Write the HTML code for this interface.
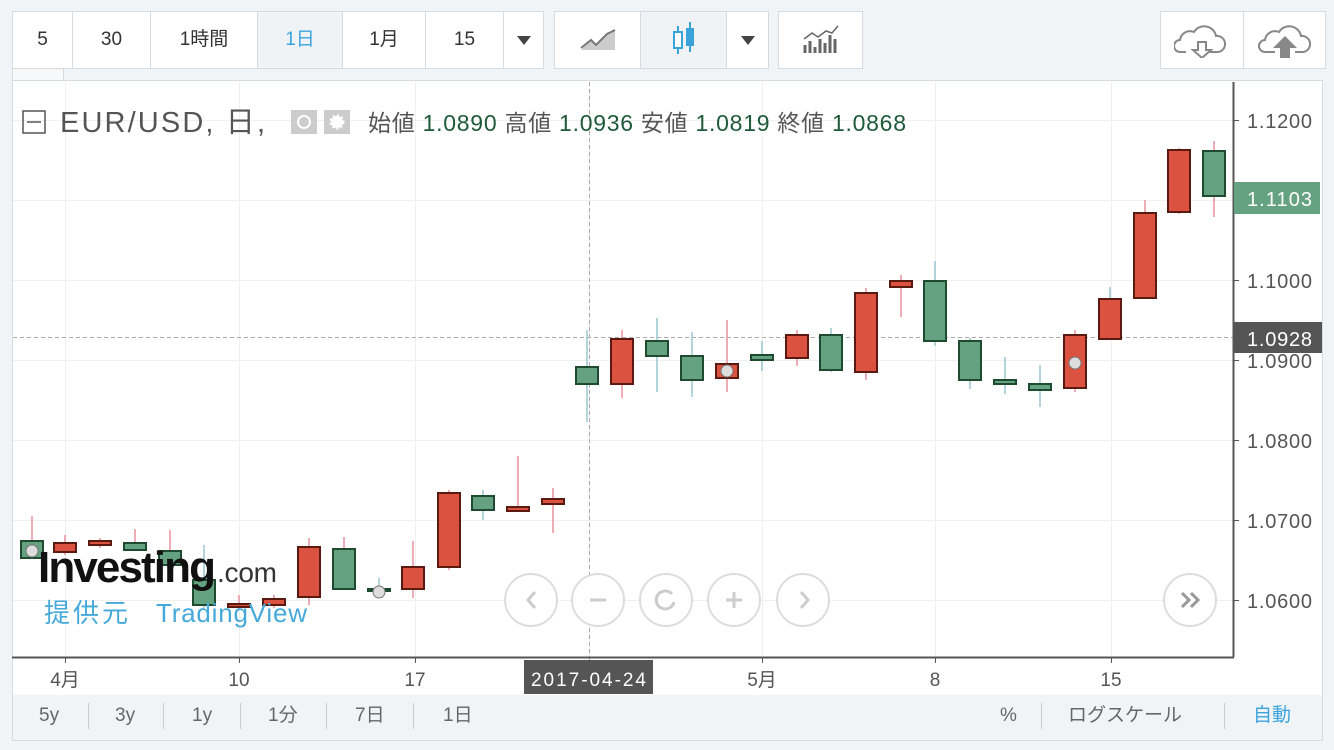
<!DOCTYPE html>
<html><head><meta charset="utf-8"><style>
*{margin:0;padding:0;box-sizing:border-box}
body{width:1334px;height:750px;background:#f1f4f7;font-family:"Liberation Sans","Noto Sans CJK JP",sans-serif;position:relative;overflow:hidden;color:#333}
.grp{position:absolute;top:11px;height:58px;background:#fff;border:1px solid #d6dbe0;display:flex}
.grp div{height:100%;border-right:1px solid #d6dbe0;display:flex;align-items:center;justify-content:center;font-size:19px;color:#333;line-height:20px}
.grp div span{display:block;height:22px;line-height:22px}
.grp div:last-child{border-right:none}
.sel{background:#f0f3f6}
.bb{position:absolute;font-size:19px;color:#666;top:703px;height:26px;line-height:26px}
.sep{position:absolute;top:703px;width:1px;height:26px;background:#c8ccd0}
</style></head><body>
<div class="grp" style="left:12px;width:532px">
<div style="width:60px"><span>5</span></div><div style="width:78px"><span>30</span></div><div style="width:107px"><span>1時間</span></div><div class="sel" style="width:85px;color:#3ba3dc"><span>1日</span></div><div style="width:83px"><span>1月</span></div><div style="width:78px"><span>15</span></div><div style="flex:1"><svg width="14" height="9"><path d="M0 0H14L7 9Z" fill="#444"/></svg></div>
</div>
<div class="grp" style="left:554px;width:215px">
<div style="width:86px"><svg width="38" height="24"><path d="M2 22L12 12L17 17L28 6L36 2V22Z" fill="#ccc"/><path d="M2 20L12 12L17 17L28 6L36 2" stroke="#777" stroke-width="2" fill="none"/></svg></div>
<div class="sel" style="width:86px"><svg width="26" height="40"><path d="M7 6V34M19 2V32" stroke="#3ba3dc" stroke-width="2"/><rect x="3" y="12" width="8" height="16" fill="#fff" stroke="#3ba3dc" stroke-width="2"/><rect x="15" y="8" width="8" height="18" fill="#3ba3dc"/></svg></div>
<div style="flex:1"><svg width="14" height="9"><path d="M0 0H14L7 9Z" fill="#444"/></svg></div>
</div>
<div class="grp" style="left:778px;width:85px"><div style="width:100%"><svg width="38" height="30"><path d="M3 28V20M8 28V16M13 28V22M18 28V14M23 28V18M28 28V10M33 28V14" stroke="#666" stroke-width="3"/><path d="M2 14L10 8L16 12L24 6L30 8L36 1" stroke="#666" stroke-width="1.5" fill="none"/></svg></div></div>
<div class="grp" style="left:1160px;width:166px">
<div style="width:83px"><svg width="56" height="36"><path d="M12 30H6a6 6 0 0 1 0-12a10 10 0 0 1 14-8a12 12 0 0 1 22 4a8 8 0 0 1 2 16H36" fill="none" stroke="#888" stroke-width="2"/><path d="M24 20h8v8h5l-9 8l-9-8h5z" fill="#fff" stroke="#888" stroke-width="2"/></svg></div>
<div style="flex:1"><svg width="56" height="36"><path d="M18 30H8a6 6 0 0 1 0-12a10 10 0 0 1 14-8a12 12 0 0 1 22 4a8 8 0 0 1 2 16H38" fill="none" stroke="#888" stroke-width="2"/><path d="M23 36V26h-7l12-12l12 12h-7v10z" fill="#888"/></svg></div>
</div>
<div style="position:absolute;left:12px;top:69px;width:52px;height:13px;border:1px solid #d6dbe0;border-top:none;background:#f7f8fa"></div>
<div style="position:absolute;left:12px;top:80px;width:1311px;height:661px;background:#fff;border:1px solid #d6dbe0"></div>
<div style="position:absolute;left:13px;top:695px;width:1309px;height:45px;background:#f1f4f7"></div>
<svg style="position:absolute;left:0;top:0" width="1334" height="750">
<g stroke="#f0f0f0" stroke-width="1">
<path d="M13 120.5H1233M13 200.5H1233M13 280.5H1233M13 360.5H1233M13 440.5H1233M13 520.5H1233M13 600.5H1233"/>
<path d="M65.5 82V657M239.5 82V657M415.5 82V657M589.5 82V657M762.5 82V657M935.5 82V657M1111.5 82V657"/>
</g>
<path d="M589.5 82V665" stroke="#aaa" stroke-dasharray="4 3"/>
<path d="M13 337.5H1233" stroke="#aaa" stroke-dasharray="4 3"/>
<g stroke-width="1.5">
<path d="M65 535V555M100 538V548M239 595V610M274 595V608M309 538V605M413 541V598M449 490V570M518 456V512M553 488V533M622 330V398M727 320V392M797 330V366M866 288V380M901 275V317M1075 330V392M1145 200V299M1179 148V214M1214 141V217M32 516V540M135 529V543M170 530V551M344 537V549" stroke="#e8909d"/>
<path d="M204 545V610M379 578V593M483 490V520M587 330V422M657 318V392M692 332V397M762 341V371M831 328V372M935 261V346M970 338V389M1005 357V394M1040 365V407M1110 287V300" stroke="#9cc5cf"/>
</g>
<g stroke="#1e4a30" stroke-width="2" fill="#65a282">
<rect x="21" y="541" width="22" height="17"/><rect x="124" y="543" width="22" height="7"/><rect x="159" y="551" width="22" height="14"/><rect x="193" y="580" width="22" height="25"/><rect x="333" y="549" width="22" height="40"/><rect x="368" y="589" width="22" height="2"/><rect x="472" y="496" width="22" height="14"/><rect x="576" y="367" width="22" height="17"/><rect x="646" y="341" width="22" height="15"/><rect x="681" y="356" width="22" height="24"/><rect x="751" y="355" width="22" height="5"/><rect x="820" y="335" width="22" height="35"/><rect x="924" y="281" width="22" height="60"/><rect x="959" y="341" width="22" height="39"/><rect x="994" y="380" width="22" height="4"/><rect x="1029" y="384" width="22" height="6"/><rect x="1203" y="151" width="22" height="45"/>
</g>
<g stroke="#5a1a10" stroke-width="2" fill="#db5340">
<rect x="54" y="543" width="22" height="9"/><rect x="89" y="541" width="22" height="4"/><rect x="228" y="604" width="22" height="3"/><rect x="263" y="599" width="22" height="6"/><rect x="298" y="547" width="22" height="50"/><rect x="402" y="567" width="22" height="22"/><rect x="438" y="493" width="22" height="74"/><rect x="507" y="507" width="22" height="4"/><rect x="542" y="499" width="22" height="5"/><rect x="611" y="339" width="22" height="45"/><rect x="716" y="364" width="22" height="14"/><rect x="786" y="335" width="22" height="23"/><rect x="855" y="293" width="22" height="79"/><rect x="890" y="281" width="22" height="6"/><rect x="1064" y="335" width="22" height="53"/><rect x="1099" y="299" width="22" height="40"/><rect x="1134" y="213" width="22" height="85"/><rect x="1168" y="150" width="22" height="62"/>
</g>
<g fill="#ddd" stroke="#777"><circle cx="32" cy="551" r="6"/><circle cx="379" cy="592" r="6"/><circle cx="727" cy="371" r="6"/><circle cx="1075" cy="363" r="6"/></g>
<path d="M1233.5 82V657M12 657.5H1234" stroke="#555" stroke-width="2"/>
<g stroke="#555"><path d="M1233 120.5h6M1233 200.5h6M1233 280.5h6M1233 360.5h6M1233 440.5h6M1233 520.5h6M1233 600.5h6M65.5 657v6M239.5 657v6M415.5 657v6M762.5 657v6M935.5 657v6M1111.5 657v6"/></g>
<g font-size="20" fill="#555" font-family="Liberation Sans,sans-serif">
<text x="1247" y="128" textLength="65">1.1200</text><text x="1247" y="288" textLength="65">1.1000</text><text x="1247" y="368" textLength="65">1.0900</text><text x="1247" y="448" textLength="65">1.0800</text><text x="1247" y="528" textLength="65">1.0700</text><text x="1247" y="608" textLength="65">1.0600</text>
</g>
<rect x="1234" y="182" width="86" height="32" fill="#65a282"/><text x="1247" y="206" font-size="20" fill="#fff" textLength="65" font-family="Liberation Sans,sans-serif">1.1103</text>
<rect x="1234" y="322" width="88" height="31" fill="#555"/><text x="1247" y="346" font-size="20" fill="#fff" textLength="65" font-family="Liberation Sans,sans-serif">1.0928</text>
<g font-size="19" fill="#555" text-anchor="middle" font-family="Liberation Sans,Noto Sans CJK JP,sans-serif">
<text x="65" y="686">4月</text><text x="239" y="686">10</text><text x="415" y="686">17</text><text x="762" y="686">5月</text><text x="935" y="686">8</text><text x="1111" y="686">15</text>
</g>
<rect x="524" y="660" width="129" height="34" fill="#555"/><text x="531" y="686" font-size="19" fill="#fff" textLength="115" font-family="Liberation Sans,sans-serif">2017-04-24</text>
<g fill="#fff" stroke="#ddd" stroke-width="2"><circle cx="531" cy="600" r="26"/><circle cx="598" cy="600" r="26"/><circle cx="666" cy="600" r="26"/><circle cx="734" cy="600" r="26"/><circle cx="803" cy="600" r="26"/><circle cx="1190" cy="600" r="26"/></g>
<g stroke="#ccc" stroke-width="3" fill="none"><path d="M535 592l-7 8l7 8M801 592l7 8l-7 8M590 600h16M734 592v16M726 600h16M672 594a9 9 0 1 0 2 8"/><path d="M1182 593l7 7l-7 7M1191 593l7 7l-7 7" stroke="#999"/></g>
<rect x="23" y="111" width="22" height="22" fill="none" stroke="#555" stroke-width="1.5"/><path d="M27 122h14" stroke="#555" stroke-width="1.5"/>
<text x="60" y="132" font-size="29" fill="#555" textLength="205" font-family="Liberation Sans,Noto Sans CJK JP,sans-serif">EUR/USD, 日,</text>
<rect x="291" y="110" width="26" height="24" fill="#ccc"/><circle cx="304" cy="122" r="6" fill="none" stroke="#fff" stroke-width="2"/><rect x="324" y="110" width="26" height="24" fill="#ccc"/><circle cx="337" cy="122" r="6" fill="#fff" stroke="#fff" stroke-dasharray="2 2" stroke-width="3"/>
<text x="368" y="131" font-size="23" textLength="538" font-family="Liberation Sans,Noto Sans CJK JP,sans-serif" fill="#555">始値 <tspan fill="#1e5a3a">1.0890</tspan> 高値 <tspan fill="#1e5a3a">1.0936</tspan> 安値 <tspan fill="#1e5a3a">1.0819</tspan> 終値 <tspan fill="#1e5a3a">1.0868</tspan></text>
<text x="38" y="582" font-size="44" font-weight="bold" fill="#111" textLength="178" font-family="Liberation Sans,sans-serif">Investing</text>
<text x="217" y="582" font-size="28" fill="#333" textLength="60" font-family="Liberation Sans,sans-serif">.com</text>
<text x="44" y="622" font-size="26" fill="#45a9db" textLength="84" font-family="Liberation Sans,Noto Sans CJK JP,sans-serif">提供元</text>
<text x="156" y="622" font-size="26" fill="#45a9db" textLength="151" font-family="Liberation Sans,sans-serif">TradingView</text>
</svg>
<div class="bb" style="left:39px">5y</div><div class="sep" style="left:88px"></div>
<div class="bb" style="left:115px">3y</div><div class="sep" style="left:163px"></div>
<div class="bb" style="left:192px">1y</div><div class="sep" style="left:240px"></div>
<div class="bb" style="left:268px">1分</div><div class="sep" style="left:326px"></div>
<div class="bb" style="left:355px">7日</div><div class="sep" style="left:413px"></div>
<div class="bb" style="left:443px">1日</div>
<div class="bb" style="left:1000px">%</div><div class="sep" style="left:1041px"></div>
<div class="bb" style="left:1068px">ログスケール</div><div class="sep" style="left:1224px"></div>
<div class="bb" style="left:1253px;color:#3ba3dc">自動</div>
</body></html>
